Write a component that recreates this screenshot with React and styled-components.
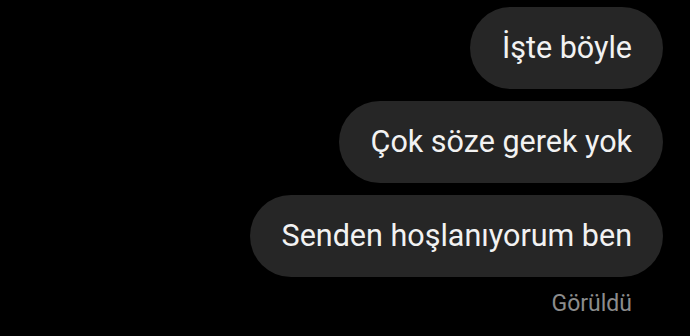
import React from "react";
import styled, { createGlobalStyle } from "styled-components";

const Global = createGlobalStyle`
  html, body { margin: 0; padding: 0; background: #000; }
  body { font-family: Roboto, "Noto Sans", sans-serif; }
`;

const Thread = styled.div`
  width: 690px;
  height: 336px;
  box-sizing: border-box;
  background: #000;
  display: flex;
  flex-direction: column;
  align-items: flex-end;
  padding: 7px 27px 0 0;
  gap: 12px;
`;

const Bubble = styled.div`
  background: #262626;
  color: #f2f2f2;
  font-size: 30.5px;
  line-height: 36px;
  padding: 23px 31px 23px 32px;
  border-radius: 41px;
  white-space: nowrap;
`;

const Seen = styled.div`
  color: #8c8c8c;
  font-size: 23px;
  line-height: 28px;
  margin-top: 1px;
  padding-right: 31px;
`;

const messages = ["İşte böyle", "Çok söze gerek yok", "Senden hoşlanıyorum ben"];

export default function App() {
  return (
    <>
      <Global />
      <Thread>
        {messages.map((m) => (
          <Bubble key={m}>{m}</Bubble>
        ))}
        <Seen>Görüldü</Seen>
      </Thread>
    </>
  );
}
